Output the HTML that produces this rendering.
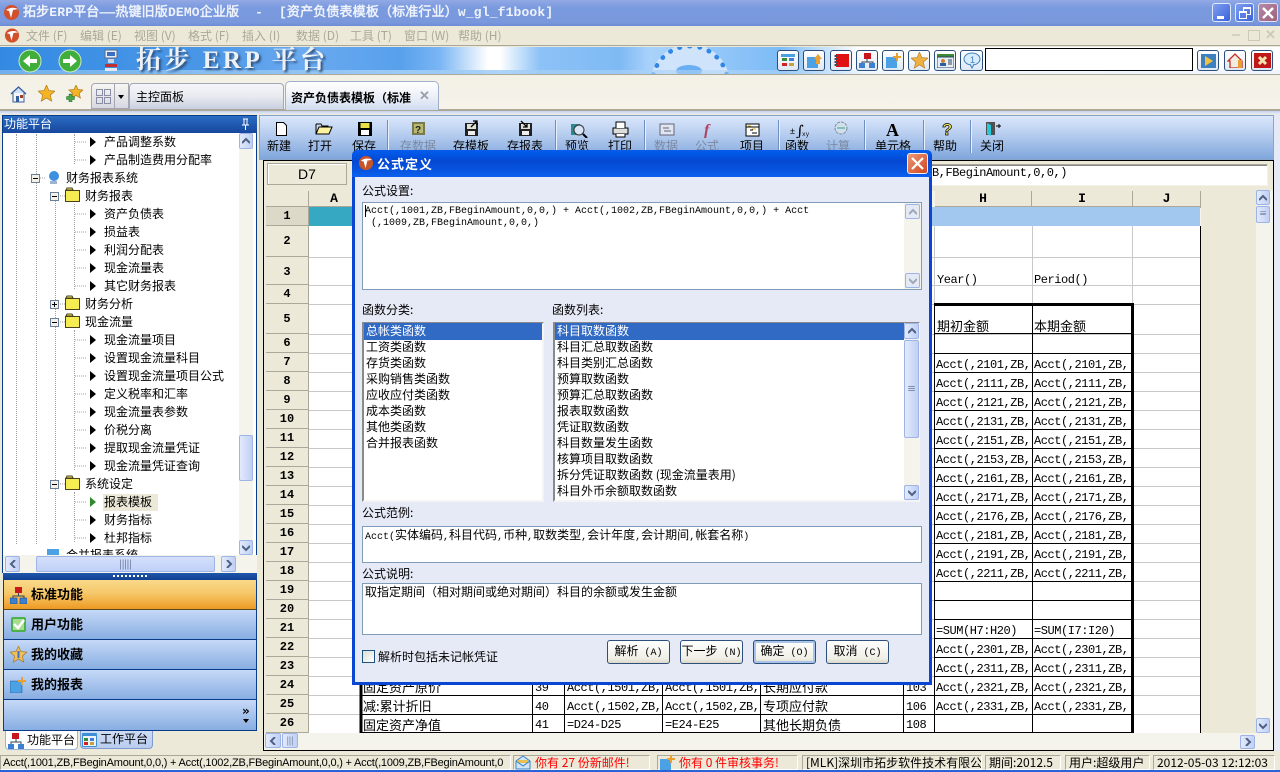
<!DOCTYPE html>
<html><head><meta charset="utf-8"><title>拓步ERP平台</title>
<style>
html,body{margin:0;padding:0}
body{position:relative;width:1280px;height:772px;overflow:hidden;background:#ece9d8;font:12px/14px "WenQuanYi Zen Hei","Noto Sans CJK SC",sans-serif;color:#000}
div,span.a,svg.a{position:absolute;white-space:pre}
.m{font-family:"Liberation Mono","WenQuanYi Zen Hei",monospace}
.k{font-size:12px;font-family:"WenQuanYi Zen Hei","Noto Sans CJK SC",sans-serif}
.c{font:12px/19px "Liberation Mono","WenQuanYi Zen Hei",monospace;letter-spacing:-.45px;overflow:hidden}
.z{font:13px/19px "WenQuanYi Zen Hei","Noto Sans CJK SC",sans-serif}
.t{line-height:14px;height:14px}
.tb{top:139px;width:60px;text-align:center}
.g{color:#7b8aa2}
.sep{top:120px;width:1px;height:33px;background:#6f8fc0;border-right:1px solid #e8f0fc}
.rh{left:266px;width:42px;background:#ece9d8;border-right:1px solid #aca899;border-bottom:1px solid #aca899;text-align:center;font:bold 12px/19px "Liberation Mono",monospace}
.ch{top:191px;height:15px;background:#ece9d8;border-right:1px solid #aca899;border-bottom:2px solid #aca899;text-align:center;font:bold 13px/16px "Liberation Mono",monospace}
.sb{background:linear-gradient(90deg,#e2eafc,#c0d0f4);border:1px solid #9fb4e6;border-radius:2px;box-sizing:border-box;text-align:center;color:#4d6185}
.sb svg{position:absolute;left:50%;top:50%;margin:-4px 0 0 -4px}
.sb path{fill:none;stroke:#4d6185;stroke-width:2}
.box{background:#fff;border:1px solid #7f9db9;box-sizing:border-box}
.btn{top:640px;width:63px;height:24px;box-sizing:border-box;border:1px solid #2d4f7c;border-radius:3px;background:linear-gradient(#fff,#f0efe6 80%,#dcd8c8);text-align:center;font:10px/20px "Liberation Mono","WenQuanYi Zen Hei",monospace}
.nb{left:3px;width:254px;height:30px;box-sizing:border-box;background:linear-gradient(#c6d9f7,#88aee2);border:1px solid #0a3c8c;border-top:0;font:bold 13px/28px "WenQuanYi Zen Hei","Noto Sans CJK SC",sans-serif}
.ib{top:50px;width:22px;height:21px;box-sizing:border-box;border:1px solid #2d4f7c;border-radius:3px;background:linear-gradient(#fff,#dfe8f4)}
.st{top:755px;height:15px;background:#ece9d8;border:1px solid #aca899;box-sizing:border-box;line-height:14px;overflow:hidden;border-right-color:#fff;border-bottom-color:#fff}
</style></head><body>

<!-- title bar -->
<div style="left:0;top:0;width:1280px;height:26px;background:linear-gradient(#92a9e4,#7a9adf 30%,#7a98dc 85%,#6d8cd8)"></div>
<svg class="a" style="left:3px;top:4px" width="17" height="17" viewBox="0 0 17 17"><circle cx="8.5" cy="8.5" r="7.5" fill="#d4502a"/><path d="M3 6Q9 2 15 5L10 6 8 14 6 7z" fill="#fff"/></svg>
<div style="left:23px;top:5px;font:bold 13px/16px 'Liberation Mono','WenQuanYi Zen Hei',monospace;letter-spacing:.15px;color:#eef2fb">拓步ERP平台——热键旧版DEMO企业版  -  [资产负债表模板（标准行业）w_gl_f1book]</div>
<div style="left:1212px;top:3px;width:19px;height:19px;background:linear-gradient(135deg,#7f9ff0,#3a62d8);border:1px solid #dfe8ff;border-radius:3px;box-sizing:border-box"><div style="left:4px;top:12px;width:7px;height:3px;background:#fff"></div></div>
<div style="left:1235px;top:3px;width:19px;height:19px;background:linear-gradient(135deg,#7f9ff0,#3a62d8);border:1px solid #dfe8ff;border-radius:3px;box-sizing:border-box"><div style="left:7px;top:3px;width:6px;height:5px;border:1px solid #fff;border-top-width:2px"></div><div style="left:3px;top:7px;width:6px;height:5px;border:1px solid #fff;border-top-width:2px;background:#5a7ee4"></div></div>
<div style="left:1258px;top:3px;width:20px;height:19px;background:linear-gradient(135deg,#b28aa8,#a0607c);border:1px solid #e4e0ee;border-radius:3px;box-sizing:border-box"><svg class="a" style="left:3px;top:3px" width="12" height="12"><path d="M1 1 11 11M11 1 1 11" stroke="#fff" stroke-width="2.4"/></svg></div>

<!-- menu bar -->
<div style="left:0;top:26px;width:1280px;height:20px;background:#ece9d8;border-bottom:1px solid #aca899;box-sizing:border-box"></div>
<svg class="a" style="left:4px;top:27px" width="16" height="17" viewBox="0 0 17 17"><circle cx="8.5" cy="8.5" r="7.5" fill="#d4502a"/><path d="M3 6Q9 2 15 5L10 6 8 14 6 7z" fill="#fff"/></svg>
<div style="left:26px;top:29px;color:#aca899">文件 (F)</div>
<div style="left:80px;top:29px;color:#aca899">编辑 (E)</div>
<div style="left:134px;top:29px;color:#aca899">视图 (V)</div>
<div style="left:188px;top:29px;color:#aca899">格式 (F)</div>
<div style="left:242px;top:29px;color:#aca899">插入 (I)</div>
<div style="left:296px;top:29px;color:#aca899">数据 (D)</div>
<div style="left:350px;top:29px;color:#aca899">工具 (T)</div>
<div style="left:404px;top:29px;color:#aca899">窗口 (W)</div>
<div style="left:458px;top:29px;color:#aca899">帮助 (H)</div>
<div style="left:1232px;top:33px;width:8px;height:1px;border-bottom:2px solid #d5d2c2"></div>
<div style="left:1248px;top:30px;width:10px;height:9px;border:1px solid #cdc9b8"></div>
<div style="left:1265px;top:28px;color:#cdc9b8;font:bold 13px/14px 'Liberation Sans',sans-serif">✕</div>

<!-- banner -->
<div style="left:0;top:47px;width:1280px;height:27px;overflow:hidden;background:linear-gradient(90deg,#348ae2 0,#4293e6 130px,#4a96e6 200px,#6aaaf0 300px,#58a0ec 400px,#7ab6f4 440px,#fff 488px,#fff 500px,#8cc2f6 540px,#7fbaf4 620px,#a9d2fa 650px,#7dbcf6 780px,#fff 860px,#fff 1280px)">
<div style="left:650px;top:-3px;width:70px;height:70px;border-radius:50%;background:#cfe4fb;border:5px dotted #2f86e4"></div>
<div style="left:676px;top:18px;width:26px;height:12px;border-radius:50%;background:#6aaef4"></div>
<div style="left:0;top:23px;width:100%;height:4px;background:linear-gradient(90deg,#6fb0ee,#9ccaf6 400px,rgba(217,234,252,.3) 900px,#eef5fd)"></div>
</div>
<svg class="a" style="left:18px;top:49px" width="24" height="24" viewBox="0 0 24 24"><circle cx="12" cy="12" r="11" fill="#3fae3a" stroke="#cde8c8"/><path d="M5 12l7-6v4h7v4h-7v4z" fill="#fff"/></svg>
<svg class="a" style="left:58px;top:49px" width="24" height="24" viewBox="0 0 24 24"><circle cx="12" cy="12" r="11" fill="#3fae3a" stroke="#cde8c8"/><path d="M19 12l-7-6v4H5v4h7v4z" fill="#fff"/></svg>
<svg class="a" style="left:103px;top:49px" width="16" height="23" viewBox="0 0 16 23"><rect x="2" y="1" width="12" height="8" fill="#e6eef8" stroke="#5a6a8c"/><rect x="4" y="3" width="8" height="4" fill="#3d6cc0"/><rect x="5" y="10" width="6" height="4" fill="#c9d4e4"/><rect x="2" y="15" width="12" height="3" fill="#c03030"/><rect x="2" y="19" width="12" height="3" fill="#e4e8f0"/></svg>
<div style="left:136px;top:46px;font:bold 25px/29px 'Liberation Serif','Noto Serif CJK SC',serif;color:#eef2f6;text-shadow:2px 2px 2px #33507a;letter-spacing:3.5px">拓步 ERP 平台</div>

<div class="ib" style="left:777px"><svg class="a" style="left:3px;top:3px" width="14" height="13"><rect width="14" height="3" fill="#4ca0e4"/><rect x="1" y="4" width="5" height="3" fill="#3a8a3a"/><rect x="8" y="4" width="5" height="3" fill="#3d80d0"/><rect x="1" y="9" width="5" height="3" fill="#d02020"/><rect x="8" y="9" width="5" height="3" fill="#c8a040"/></svg></div>
<div class="ib" style="left:803px"><svg class="a" style="left:3px;top:2px" width="15" height="15"><rect x="0" y="4" width="11" height="11" fill="#4ca0e4"/><path d="M7 6l4-5 4 5h-2v5H9V6z" fill="#e8a030"/></svg></div>
<div class="ib" style="left:830px"><svg class="a" style="left:2px;top:2px" width="17" height="15"><rect x="3" y="1" width="13" height="13" fill="#e01010"/><path d="M3 2v11" stroke="#404a60" stroke-width="3" stroke-dasharray="2 1"/></svg></div>
<div class="ib" style="left:856px"><svg class="a" style="left:2px;top:2px" width="16" height="15"><rect x="5" y="0" width="7" height="6" fill="#c8161c"/><path d="M8 6v3M3 11V9h11v2" stroke="#345" fill="none"/><rect x="0" y="10" width="6" height="5" fill="#3d80d0"/><rect x="10" y="10" width="6" height="5" fill="#3d80d0"/></svg></div>
<div class="ib" style="left:882px"><svg class="a" style="left:3px;top:2px" width="15" height="15"><rect x="0" y="4" width="11" height="11" fill="#4ca0e4"/><path d="M7 3h3V0h2v3h3v2h-3v3h-2V5H7z" fill="#e8a030"/></svg></div>
<div class="ib" style="left:908px"><svg class="a" style="left:2px;top:1px" width="17" height="17" viewBox="0 0 17 17"><path d="M8.5 0l2.4 5.6 6 .5-4.6 4 1.400 6-5.200-3.200-5.200 3.200 1.400-6L0 6.100l6-.5z" fill="#eeb040" stroke="#b07820" stroke-width=".6"/></svg></div>
<div class="ib" style="left:934px"><svg class="a" style="left:2px;top:3px" width="17" height="14"><rect width="17" height="3" fill="#3a8a3a"/><rect y="3" width="17" height="11" fill="#e6eef8" stroke="#345"/><circle cx="6" cy="7" r="2" fill="#d08030"/><rect x="3" y="9" width="6" height="3" fill="#2a60a0"/><path d="M11 6h4M11 8h4M11 10h4" stroke="#345"/></svg></div>
<div class="ib" style="left:960px;width:23px"><svg class="a" style="left:2px;top:1px" width="18" height="17"><ellipse cx="9" cy="7" rx="8" ry="6" fill="#d8ecfb" stroke="#3d80c0"/><path d="M7 12l2 4 2-4" fill="#d8ecfb" stroke="#3d80c0"/><text x="7" y="11" font-size="9" fill="#3d80c0" font-family="Liberation Sans">1</text></svg></div>
<div style="left:985px;top:48px;width:208px;height:23px;background:#fff;border:1px solid #000;box-sizing:border-box"></div>
<div class="ib" style="left:1197px"><svg class="a" style="left:3px;top:3px" width="15" height="14"><rect width="15" height="14" fill="#3d80c0"/><path d="M4 2l8 5-8 5z" fill="#f0c040"/></svg></div>
<div class="ib" style="left:1224px"><svg class="a" style="left:2px;top:2px" width="17" height="15"><path d="M1 8l7-7 7 7v7H3V8z" fill="#f0ece0" stroke="#c03020" stroke-width="1.300"/><rect x="11" y="7" width="4" height="8" fill="#e8a030"/></svg></div>
<div class="ib" style="left:1251px"><svg class="a" style="left:2px;top:2px" width="17" height="15"><rect width="17" height="15" fill="#c01818"/><path d="M5 4l7 7M12 4l-7 7" stroke="#f4e4b0" stroke-width="3"/></svg></div>

<!-- tab strip -->
<div style="left:0;top:74px;width:1280px;height:36px;background:linear-gradient(#f3f1e6,#f5f3ea);border-top:1px solid #aca899;box-sizing:border-box"></div>
<div style="left:0;top:109px;width:1280px;height:2px;background:#aca899"></div>
<div style="left:0;top:111px;width:1280px;height:3px;background:linear-gradient(#c4cfea,#e6eaf6)"></div>
<svg class="a" style="left:10px;top:85px" width="17" height="18" viewBox="0 0 17 18"><path d="M1 9l7.500-7 7.500 7" fill="#cfe0f4" stroke="#355f9c" stroke-width="1.300"/><path d="M3 8v9h11V8" fill="#f4f6fb" stroke="#355f9c"/><rect x="6" y="11" width="3" height="6" fill="#355f9c"/><rect x="10" y="10" width="3" height="3" fill="#a04020"/></svg>
<svg class="a" style="left:38px;top:85px" width="17" height="17" viewBox="0 0 17 17"><path d="M8.500 0l2.400 5.600 6 .5-4.600 4 1.400 6-5.200-3.200-5.200 3.200 1.400-6L0 6.100l6-.5z" fill="#f4b424" stroke="#b07820" stroke-width=".7"/></svg>
<svg class="a" style="left:66px;top:85px" width="17" height="17" viewBox="0 0 17 17"><path d="M10 0l2 4.500 5 .5-3.800 3.300 1.200 4.700-4.400-2.600-4.400 2.600 1.200-4.700L2.900 5l5-.5z" fill="#f4b424" stroke="#b07820" stroke-width=".7"/><path d="M3 9v2.500H.5v3H3V17h3v-2.500h2.500v-3H6V9z" fill="#46a846" stroke="#2a6a2a" stroke-width=".5"/></svg>
<div style="left:91px;top:83px;width:24px;height:26px;background:linear-gradient(#f6f6f2,#d8d8e2);border:1px solid #a5a6b4;border-radius:4px 0 0 0;box-sizing:border-box"><div style="left:4px;top:5px;width:5px;height:5px;border:1px solid #8a8ea4"></div><div style="left:12px;top:5px;width:5px;height:5px;border:1px solid #8a8ea4"></div><div style="left:4px;top:13px;width:5px;height:5px;border:1px solid #8a8ea4"></div><div style="left:12px;top:13px;width:5px;height:5px;border:1px solid #8a8ea4"></div></div>
<div style="left:115px;top:83px;width:14px;height:26px;background:linear-gradient(#f6f6f2,#d8d8e2);border:1px solid #a5a6b4;border-left:0;box-sizing:border-box"><div style="left:3px;top:11px;width:0;height:0;border:3px solid transparent;border-top:4px solid #000"></div></div>
<div style="left:129px;top:83px;width:155px;height:26px;background:linear-gradient(#f5f6fa,#e8eaf0 50%,#c8cfe0);border:1px solid #a5a6b4;border-bottom:0;border-radius:4px 4px 0 0;box-sizing:border-box;line-height:26px;padding-left:6px">主控面板</div>
<div style="left:285px;top:81px;width:154px;height:29px;background:linear-gradient(#fff,#e8edf6 60%,#cfdcf0);border:1px solid #9fb0c8;border-bottom:0;border-radius:5px 5px 0 0;box-sizing:border-box;font-weight:bold;line-height:32px;padding-left:5px;overflow:hidden"><span style="display:inline-block;width:120px;overflow:hidden;vertical-align:top;font-size:12px">资产负债表模板（标准行业</span></div>
<div style="left:419px;top:89px;color:#9aa0aa;font:bold 13px/14px 'Liberation Sans',sans-serif">✕</div>

<!-- side strips -->
<div style="left:1274px;top:114px;width:6px;height:638px;background:#e6eaf6"></div>

<!-- left panel -->
<div style="left:2px;top:115px;width:255px;height:458px;background:#fff;border:1px solid #0a3c8c;box-sizing:border-box"></div>
<div style="left:3px;top:116px;width:254px;height:17px;background:linear-gradient(#2b6cc4,#16479c);color:#fff;line-height:16px;padding-left:1px;font-size:12px;box-sizing:border-box">功能平台</div>
<svg class="a" style="left:240px;top:118px" width="12" height="13"><path d="M3 1h5M4 1v6h3V1M2 7h7M5.500 7v5" stroke="#fff" fill="none"/></svg>
<!-- dotted tree lines -->
<div style="left:16px;top:134px;height:420px;border-left:1px dotted #a0a0a0"></div>
<div style="left:36px;top:134px;height:420px;border-left:1px dotted #a0a0a0"></div>
<div style="left:55px;top:195px;height:345px;border-left:1px dotted #a0a0a0"></div>
<div style="left:74px;top:134px;height:30px;border-left:1px dotted #a0a0a0"></div>
<div style="left:74px;top:204px;height:85px;border-left:1px dotted #a0a0a0"></div>
<div style="left:74px;top:330px;height:140px;border-left:1px dotted #a0a0a0"></div>
<div style="left:74px;top:492px;height:50px;border-left:1px dotted #a0a0a0"></div>

<div class="t" style="left:104px;top:135px">产品调整系数</div><div class="t" style="left:104px;top:153px">产品制造费用分配率</div>
<div class="t" style="left:66px;top:171px">财务报表系统</div><div class="t" style="left:85px;top:189px">财务报表</div>
<div class="t" style="left:104px;top:207px">资产负债表</div><div class="t" style="left:104px;top:225px">损益表</div><div class="t" style="left:104px;top:243px">利润分配表</div><div class="t" style="left:104px;top:261px">现金流量表</div><div class="t" style="left:104px;top:279px">其它财务报表</div>
<div class="t" style="left:85px;top:297px">财务分析</div><div class="t" style="left:85px;top:315px">现金流量</div>
<div class="t" style="left:104px;top:333px">现金流量项目</div><div class="t" style="left:104px;top:351px">设置现金流量科目</div><div class="t" style="left:104px;top:369px">设置现金流量项目公式</div><div class="t" style="left:104px;top:387px">定义税率和汇率</div><div class="t" style="left:104px;top:405px">现金流量表参数</div><div class="t" style="left:104px;top:423px">价税分离</div><div class="t" style="left:104px;top:441px">提取现金流量凭证</div><div class="t" style="left:104px;top:459px">现金流量凭证查询</div>
<div class="t" style="left:85px;top:477px">系统设定</div>
<div style="left:103px;top:494px;width:55px;height:17px;background:#ece9d8"></div><div class="t" style="left:104px;top:495px">报表模板</div>
<div class="t" style="left:104px;top:513px">财务指标</div><div class="t" style="left:104px;top:531px">杜邦指标</div>

<svg class="a" style="left:3px;top:134px" width="236" height="421" viewBox="3 134 236 421">
<g stroke="#a0a0a0" stroke-dasharray="1 1">
<path d="M75 142h11M75 160h11M75 214h11M75 232h11M75 250h11M75 268h11M75 286h11M75 340h11M75 358h11M75 376h11M75 394h11M75 412h11M75 430h11M75 448h11M75 466h11M75 502h11M75 520h11M75 538h11M40 178h6M60 196h5M60 304h5M60 322h5M60 484h5"/></g>
<g fill="#000"><path d="M90 137l6 5-6 5zM90 155l6 5-6 5zM90 209l6 5-6 5zM90 227l6 5-6 5zM90 245l6 5-6 5zM90 263l6 5-6 5zM90 281l6 5-6 5zM90 335l6 5-6 5zM90 353l6 5-6 5zM90 371l6 5-6 5zM90 389l6 5-6 5zM90 407l6 5-6 5zM90 425l6 5-6 5zM90 443l6 5-6 5zM90 461l6 5-6 5zM90 515l6 5-6 5zM90 533l6 5-6 5z"/><path d="M90 497l6 5-6 5z" fill="#2f8a2f"/></g>
<g fill="#f4f2e8" stroke="#6a7f9c"><rect x="31.500" y="174.500" width="8" height="8"/><rect x="50.500" y="192.500" width="8" height="8"/><rect x="50.500" y="300.500" width="8" height="8"/><rect x="50.500" y="318.500" width="8" height="8"/><rect x="50.500" y="480.500" width="8" height="8"/></g>
<path d="M33 178.500h5M52 196.500h5M52 304.500h5M54.500 302v5M52 322.500h5M52 484.500h5" stroke="#000"/>
<g fill="#f4ec50" stroke="#4a4020"><path d="M65.500 190.500h14v11h-14zM66 190l1-2h5l1 2zM65.500 298.500h14v11h-14zM66 298l1-2h5l1 2zM65.500 316.500h14v11h-14zM66 316l1-2h5l1 2zM65.500 478.500h14v11h-14zM66 478l1-2h5l1 2z"/></g>
<g><circle cx="54" cy="176" r="5" fill="#3d90e0"/><rect x="50" y="181" width="7" height="3" fill="#a0b4d0"/></g>
</svg>
<div style="left:3px;top:545px;width:236px;height:10px;background:#fff"></div>
<div style="left:47px;top:549px;width:12px;height:6px;background:#4ca0e4"></div>
<div class="t" style="left:66px;top:549px;height:6px;overflow:hidden;line-height:12px">合并报表系统</div>

<!-- left vscroll -->
<div style="left:239px;top:134px;width:14px;height:421px;background:#f5f4ec"></div>
<div class="sb" style="left:239px;top:133px;width:14px;height:16px"><svg width="8" height="8"><path d="M0 6l4-4 4 4"/></svg></div>
<div class="sb" style="left:239px;top:435px;width:14px;height:46px"></div>
<div class="sb" style="left:239px;top:540px;width:14px;height:15px"><svg width="8" height="8"><path d="M0 2l4 4 4-4"/></svg></div>
<!-- left hscroll -->
<div style="left:3px;top:555px;width:254px;height:18px;background:#f5f4ec"></div>
<div class="sb" style="left:5px;top:556px;width:15px;height:16px"><svg width="8" height="8"><path d="M6 0L2 4l4 4"/></svg></div>
<div class="sb" style="left:36px;top:556px;width:179px;height:16px;background:linear-gradient(#d4dffa,#c0d0f8);line-height:14px;font-size:9px">|||||</div>
<div class="sb" style="left:221px;top:556px;width:15px;height:16px"><svg width="8" height="8"><path d="M2 0l4 4-4 4"/></svg></div>
<!-- splitter -->
<div style="left:3px;top:573px;width:254px;height:7px;background:linear-gradient(#1e57ad,#123f90)"></div>
<div style="left:113px;top:575px;width:34px;height:2px;background:repeating-linear-gradient(90deg,#fff 0 2px,transparent 2px 4px)"></div>
<!-- nav bars -->
<div class="nb" style="top:580px;background:linear-gradient(#f9d98a,#f6c86a 45%,#ee9a24);border-bottom-color:#5a4a20;padding-left:27px">标准功能</div>
<div class="nb" style="top:610px;padding-left:27px">用户功能</div>
<div class="nb" style="top:640px;padding-left:27px">我的收藏</div>
<div class="nb" style="top:670px;padding-left:27px">我的报表</div>
<div class="nb" style="top:700px;height:31px"></div>
<div style="left:242px;top:705px;font:bold 12px/12px 'DejaVu Sans',sans-serif">»</div>
<div style="left:243px;top:719px;width:0;height:0;border:3px solid transparent;border-top:4px solid #000"></div>
<svg class="a" style="left:10px;top:587px" width="17" height="17"><rect x="5" y="0" width="7" height="6" fill="#c8161c"/><path d="M8.500 6v3M3 11V9h11v2" stroke="#345" fill="none"/><rect x="0" y="11" width="7" height="6" fill="#3d80d0" stroke="#1a4a90" stroke-width=".6"/><rect x="10" y="11" width="7" height="6" fill="#3d80d0" stroke="#1a4a90" stroke-width=".6"/></svg>
<svg class="a" style="left:11px;top:617px" width="15" height="15"><rect width="15" height="15" rx="2" fill="#4cb04c"/><rect x="2" y="2" width="11" height="11" fill="#a8dc90"/><path d="M3 7l4 4 6-8" stroke="#fff" stroke-width="2.500" fill="none"/></svg>
<svg class="a" style="left:10px;top:646px" width="17" height="17" viewBox="0 0 17 17"><path d="M8.500 0l2.400 5.600 6 .5-4.600 4 1.400 6-5.200-3.200-5.200 3.200 1.400-6L0 6.100l6-.5z" fill="#f0c060" stroke="#a87820" stroke-width=".7"/><path d="M8.500 5v7" stroke="#3d70c0" stroke-width="2"/></svg>
<svg class="a" style="left:10px;top:677px" width="16" height="16"><rect x="0" y="4" width="12" height="12" rx="1" fill="#4ca0e4" stroke="#1a5a9c" stroke-width=".6"/><path d="M8 3h3V0h2v3h3v2h-3v3h-2V5H8z" fill="#e8a030"/></svg>
<!-- bottom tabs -->
<div style="left:5px;top:731px;width:73px;height:19px;background:#fff;border:1px solid #9fb4d4;border-top:0;border-radius:0 0 4px 4px;box-sizing:border-box;line-height:17px;padding-left:21px">功能平台</div>
<div style="left:80px;top:731px;width:73px;height:18px;background:linear-gradient(#cfdcf4,#b9cdf0);border:1px solid #7f9ccc;border-top:0;border-radius:0 0 4px 4px;box-sizing:border-box;line-height:16px;padding-left:19px">工作平台</div>
<svg class="a" style="left:8px;top:733px" width="16" height="16"><rect x="4" y="0" width="7" height="6" fill="#c8161c"/><path d="M8 6v3M3 11V9h10v2" stroke="#345" fill="none"/><rect x="0" y="11" width="6" height="5" fill="#3d80d0"/><rect x="10" y="11" width="6" height="5" fill="#3d80d0"/></svg>
<svg class="a" style="left:82px;top:733px" width="15" height="14"><rect width="15" height="14" rx="1" fill="#3d90d8"/><rect x="1" y="3" width="13" height="10" fill="#eef3fb"/><rect x="2" y="5" width="4" height="3" fill="#3a8a3a"/><rect x="8" y="5" width="4" height="3" fill="#3d80d0"/><rect x="2" y="9" width="4" height="3" fill="#d02020"/><rect x="8" y="9" width="4" height="3" fill="#c8a040"/></svg>

<!-- right frame -->
<div style="left:263px;top:160px;width:1011px;height:591px;border:1px solid #000;box-sizing:border-box;background:#f5f4ec"></div>
<div style="left:259px;top:115px;width:1015px;height:45px;background:linear-gradient(#dbe7fb,#b9cff0 40%,#7fa6dc);border:1px solid #8aa4cc;box-sizing:border-box"></div>
<div class="sep" style="left:387px"></div><div class="sep" style="left:555px"></div><div class="sep" style="left:644px"></div><div class="sep" style="left:778px"></div><div class="sep" style="left:864px"></div><div class="sep" style="left:923px"></div><div class="sep" style="left:970px"></div>

<div class="tb" style="left:249px">新建</div><div class="tb" style="left:290px">打开</div><div class="tb" style="left:334px">保存</div><div class="tb g" style="left:388px">存数据</div><div class="tb" style="left:441px">存模板</div><div class="tb" style="left:495px">存报表</div><div class="tb" style="left:547px">预览</div><div class="tb" style="left:590px">打印</div><div class="tb g" style="left:636px">数据</div><div class="tb g" style="left:677px">公式</div><div class="tb" style="left:722px">项目</div><div class="tb" style="left:767px">函数</div><div class="tb g" style="left:808px">计算</div><div class="tb" style="left:863px">单元格</div><div class="tb" style="left:915px">帮助</div><div class="tb" style="left:962px">关闭</div>

<svg class="a" style="left:261px;top:118px" width="750" height="20" viewBox="261 118 750 20">
<path d="M276.500 122.500h7l3 3v10h-10z" fill="#fff" stroke="#000"/>
<path d="M316 124v10h13l3-7h-13l-3 7M316 124h5l1 2h6v1" fill="#fbf3a0" stroke="#000"/>
<rect x="358" y="122" width="14" height="14" fill="#000"/><rect x="360.500" y="123" width="9" height="5" fill="#ece048"/><rect x="361" y="130" width="8" height="5" fill="#fff"/>
<rect x="412" y="122" width="13" height="13" fill="#7a7a50"/><rect x="414" y="124" width="9" height="9" fill="#b8b870"/><text x="415" y="133" font-size="10" font-weight="bold" fill="#222" font-family="Liberation Sans">?</text>
<rect x="465" y="123" width="13" height="13" fill="#222"/><rect x="467" y="124" width="9" height="5" fill="#e0e0d8"/><rect x="468" y="131" width="7" height="4" fill="#eee"/><path d="M471 127l6-6M473 121h4v4" stroke="#000" fill="none" stroke-width="1.300"/>
<rect x="519" y="123" width="13" height="13" fill="#222"/><rect x="521" y="124" width="9" height="5" fill="#e0e0d8"/><rect x="522" y="131" width="7" height="4" fill="#eee"/><path d="M521 121l6 6M527 123v4h-4" stroke="#000" fill="none" stroke-width="1.300"/>
<rect x="571" y="124" width="9" height="11" fill="#2a8a90"/><circle cx="579" cy="130" r="5" fill="#dbe4f6" stroke="#333"/><path d="M583 134l4 4" stroke="#000" stroke-width="2"/>
<path d="M613 128h15v6h-15z" fill="#ddd" stroke="#000"/><path d="M616 128v-6h9v6M616 134v3h9v-3" fill="#fff" stroke="#000"/>
<rect x="660" y="124" width="14" height="11" fill="#dfe6f0" stroke="#667"/><path d="M663 128h6M664 131h7" stroke="#667"/>
<text x="704" y="135" font-size="16" font-style="italic" font-weight="bold" fill="#b04060" font-family="Liberation Serif">f</text>
<rect x="746" y="124" width="13" height="12" fill="#fff" stroke="#000"/><path d="M746 127h13M750 130h3M752 133h5" stroke="#000" fill="none"/><path d="M748 126h3M752 129h4" stroke="#c8b020"/>
<text x="790" y="134" font-size="9" font-family="Liberation Sans">±</text><text x="796" y="136" font-size="15" font-family="DejaVu Serif">∫</text><text x="802" y="136" font-size="6" font-family="Liberation Mono">xy</text>
<circle cx="841" cy="128" r="6" fill="#cfe0ea" stroke="#7a8a9c" stroke-dasharray="3 1"/><path d="M837 128h8" stroke="#3aa090"/>
<text x="886" y="136" font-size="18" font-weight="bold" font-family="Liberation Serif">A</text>
<text x="942" y="135" font-size="17" font-weight="bold" fill="#f4e860" stroke="#000" stroke-width=".7" font-family="Liberation Sans">?</text>
<rect x="986" y="122" width="9" height="13" fill="#505050"/><path d="M987 123l4 2v11l-4-2z" fill="#28c8d8"/><path d="M996 126h5M999 124v4" stroke="#000"/>
</svg>

<!-- formula bar -->
<div style="left:264px;top:161px;width:1009px;height:30px;background:#ece9d8"></div>
<div style="left:267px;top:163px;width:80px;height:22px;background:#ece9d8;border:1px solid #aca899;box-shadow:inset 1px 1px #fff;box-sizing:border-box;text-align:center;font:14px/20px 'Liberation Sans',sans-serif">D7</div>
<div style="left:353px;top:164px;width:915px;height:22px;background:#fff;border:1px solid #aca899;border-bottom-color:#f4f2e8;border-right-color:#f4f2e8;box-shadow:inset 0 1px #888;box-sizing:border-box"></div>
<div class="c" style="left:932px;top:164px;height:19px;line-height:19px;width:200px">B,FBeginAmount,0,0,)</div>

<!-- grid -->
<div style="left:309px;top:207px;width:891px;height:526px;background:#fff"></div>
<div style="left:264px;top:191px;width:2px;height:542px;background:#ece9d8"></div>
<div class="ch" style="left:266px;width:42px"></div>
<div class="ch" style="left:309px;width:50px">A</div>
<div class="ch" style="left:935px;width:96px">H</div><div class="ch" style="left:1032px;width:100px">I</div><div class="ch" style="left:1133px;width:67px">J</div>
<div style="left:309px;top:207px;width:891px;height:19px;background:#a3c8ef"></div>
<div style="left:309px;top:207px;width:50px;height:19px;background:#37a8c2"></div>
<div class="rh" style="top:207px;height:18px;background:#dcd9c8">1</div>
<div class="rh" style="top:226px;height:30px;line-height:30px">2</div>
<div class="rh" style="top:257px;height:27px;line-height:30px">3</div>
<div class="rh" style="top:285px;height:18px">4</div>
<div class="rh" style="top:304px;height:29px;line-height:30px">5</div>
<div class="rh" style="top:334px;height:18px">6</div>
<div class="rh" style="top:353px;height:18px">7</div><div class="rh" style="top:372px;height:18px">8</div><div class="rh" style="top:391px;height:18px">9</div><div class="rh" style="top:410px;height:18px">10</div><div class="rh" style="top:429px;height:18px">11</div><div class="rh" style="top:448px;height:18px">12</div><div class="rh" style="top:467px;height:18px">13</div><div class="rh" style="top:486px;height:18px">14</div><div class="rh" style="top:505px;height:18px">15</div><div class="rh" style="top:524px;height:18px">16</div><div class="rh" style="top:543px;height:18px">17</div><div class="rh" style="top:562px;height:18px">18</div><div class="rh" style="top:581px;height:18px">19</div><div class="rh" style="top:600px;height:18px">20</div><div class="rh" style="top:619px;height:18px">21</div><div class="rh" style="top:638px;height:18px">22</div><div class="rh" style="top:657px;height:18px">23</div><div class="rh" style="top:676px;height:18px">24</div><div class="rh" style="top:695px;height:18px">25</div><div class="rh" style="top:714px;height:18px">26</div>

<svg class="a" style="left:0;top:0" width="1280" height="772" shape-rendering="crispEdges">
<path stroke="#c8c8c8" d="M309 257.500H1200M309 285.500H1200M309 304.500H1200M309 334.500H1200M309 353.500H1200M309 372.500H1200M309 391.500H1200M309 410.500H1200M309 429.500H1200M309 448.500H1200M309 467.500H1200M309 486.500H1200M309 505.500H1200M309 524.500H1200M309 543.500H1200M309 562.500H1200M309 581.500H1200M309 600.500H1200M309 619.500H1200M309 638.500H1200M309 657.500H1200M309 676.500H1200M309 695.500H1200M309 714.500H1200"/>
<path stroke="#c8c8c8" d="M1032.500 226V304M934.500 226V304M1132.500 226V304"/>
<path stroke="#000" d="M1200.500 226V733M934 333.500H1133M934 353.500H1133M934 372.500H1133M934 391.500H1133M934 410.500H1133M934 429.500H1133M934 448.500H1133M934 467.500H1133M934 486.500H1133M934 505.500H1133M934 524.500H1133M934 543.500H1133M934 562.500H1133M934 581.500H1133M934 600.500H1133M934 619.500H1133M934 638.500H1133M934 657.500H1133M934 676.500H1133M360 695.500H1133M360 714.500H1133M360 732.500H1133M934.500 304V733M1032.500 304V733M532.500 676V733M564.500 676V733M662.500 676V733M760.500 676V733M903.500 676V733"/>
<path stroke="#000" stroke-width="3" d="M934 304.500H1134M1132.500 304V733M361 676V733"/>
</svg>

<div class="c" style="left:937px;top:271px">Year()</div><div class="c" style="left:1034px;top:271px">Period()</div>
<div class="z" style="left:937px;top:316px">期初金额</div><div class="z" style="left:1034px;top:316px">本期金额</div>

<div class="c" style="left:936px;top:356px;width:96px;height:228px">Acct(,2101,ZB,
Acct(,2111,ZB,
Acct(,2121,ZB,
Acct(,2131,ZB,
Acct(,2151,ZB,
Acct(,2153,ZB,
Acct(,2161,ZB,
Acct(,2171,ZB,
Acct(,2176,ZB,
Acct(,2181,ZB,
Acct(,2191,ZB,
Acct(,2211,ZB,</div>
<div class="c" style="left:1034px;top:356px;width:97px;height:228px">Acct(,2101,ZB,
Acct(,2111,ZB,
Acct(,2121,ZB,
Acct(,2131,ZB,
Acct(,2151,ZB,
Acct(,2153,ZB,
Acct(,2161,ZB,
Acct(,2171,ZB,
Acct(,2176,ZB,
Acct(,2181,ZB,
Acct(,2191,ZB,
Acct(,2211,ZB,</div>
<div class="c" style="left:936px;top:622px;width:96px">=SUM(H7:H20)</div><div class="c" style="left:1034px;top:622px;width:97px">=SUM(I7:I20)</div>
<div class="c" style="left:936px;top:641px;width:96px;height:76px">Acct(,2301,ZB,
Acct(,2311,ZB,
Acct(,2321,ZB,
Acct(,2331,ZB,</div>
<div class="c" style="left:1034px;top:641px;width:97px;height:76px">Acct(,2301,ZB,
Acct(,2311,ZB,
Acct(,2321,ZB,
Acct(,2331,ZB,</div>
<div class="z" style="left:363px;top:677px">固定资产原价</div><div class="c" style="left:535px;top:679px">39</div><div class="c" style="left:567px;top:679px;width:95px">Acct(,1501,ZB,</div><div class="c" style="left:665px;top:679px;width:95px">Acct(,1501,ZB,</div><div class="z" style="left:763px;top:677px">长期应付款</div><div class="c" style="left:906px;top:679px">103</div>
<div class="z" style="left:363px;top:696px">减:累计折旧</div><div class="c" style="left:535px;top:698px">40</div><div class="c" style="left:567px;top:698px;width:95px">Acct(,1502,ZB,</div><div class="c" style="left:665px;top:698px;width:95px">Acct(,1502,ZB,</div><div class="z" style="left:763px;top:696px">专项应付款</div><div class="c" style="left:906px;top:698px">106</div>
<div class="z" style="left:363px;top:715px">固定资产净值</div><div class="c" style="left:535px;top:716px">41</div><div class="c" style="left:567px;top:716px">=D24-D25</div><div class="c" style="left:665px;top:716px">=E24-E25</div><div class="z" style="left:763px;top:715px">其他长期负债</div><div class="c" style="left:906px;top:716px">108</div>

<!-- sheet scrollbars -->
<div style="left:1201px;top:191px;width:55px;height:542px;background:#ece9d8"></div>
<div style="left:1256px;top:191px;width:14px;height:542px;background:#f5f4ec"></div>
<div class="sb" style="left:1256px;top:190px;width:14px;height:15px"><svg width="8" height="8"><path d="M0 6l4-4 4 4"/></svg></div>
<div class="sb" style="left:1256px;top:206px;width:14px;height:17px;font-size:8px;line-height:14px">≡</div>
<div class="sb" style="left:1256px;top:718px;width:14px;height:15px"><svg width="8" height="8"><path d="M0 2l4 4 4-4"/></svg></div>
<div style="left:265px;top:733px;width:1007px;height:16px;background:#f5f4ec"></div>
<div class="sb" style="left:265px;top:733px;width:16px;height:15px"><svg width="8" height="8"><path d="M6 0L2 4l4 4"/></svg></div>
<div class="sb" style="left:282px;top:733px;width:16px;height:15px;font-size:8px;line-height:13px">|||</div>
<div class="sb" style="left:1240px;top:735px;width:15px;height:14px"><svg width="8" height="8"><path d="M2 0l4 4-4 4"/></svg></div>

<!-- dialog -->
<div style="left:352px;top:150px;width:580px;height:535px;background:#e6eaf6;border:3px solid #0a46d2;border-top:0;border-radius:5px 5px 0 0;box-sizing:border-box"></div>
<div style="left:352px;top:150px;width:580px;height:27px;background:linear-gradient(#0a5cec,#0058e8 12%,#0548d2 40%,#0656e2 80%,#0a60f0);border-radius:6px 6px 0 0"></div>
<svg class="a" style="left:358px;top:155px" width="16" height="16" viewBox="0 0 17 17"><circle cx="8.500" cy="8.500" r="7.500" fill="#c8552a"/><path d="M3 6Q9 2 15 5L10 6 8 14 6 7z" fill="#fff"/></svg>
<div style="left:377px;top:155px;color:#fff;font:bold 13px/17px 'WenQuanYi Zen Hei','Noto Sans CJK SC',sans-serif;letter-spacing:1px">公式定义</div>
<div style="left:907px;top:153px;width:21px;height:21px;box-sizing:border-box;border:1px solid #f0f0f0;border-radius:3px;background:linear-gradient(135deg,#ec9a78,#d0451e)"><svg class="a" style="left:3px;top:3px" width="13" height="13"><path d="M1 1 12 12M12 1 1 12" stroke="#fff" stroke-width="2.200"/></svg></div>

<div style="left:362px;top:184px">公式设置:</div>
<div class="box" style="left:362px;top:202px;width:560px;height:88px"></div>
<div style="left:365px;top:205px;width:1px;height:12px;background:#000"></div>
<div class="m" style="left:365px;top:206px;font-size:10px;line-height:12px">Acct(,1001,ZB,FBeginAmount,0,0,) + Acct(,1002,ZB,FBeginAmount,0,0,) + Acct
 (,1009,ZB,FBeginAmount,0,0,)</div>
<div style="left:904px;top:203px;width:17px;height:86px;background:#f5f4ec"></div>
<div class="sb" style="left:905px;top:204px;width:15px;height:15px;background:#e4e9f6"><svg width="8" height="8"><path d="M0 6l4-4 4 4" style="stroke:#a0a6b4"/></svg></div>
<div class="sb" style="left:905px;top:273px;width:15px;height:15px;background:#e4e9f6"><svg width="8" height="8"><path d="M0 2l4 4 4-4" style="stroke:#a0a6b4"/></svg></div>

<div style="left:362px;top:303px">函数分类:</div>
<div style="left:552px;top:303px">函数列表:</div>
<div style="left:362px;top:322px;width:182px;height:180px;background:#fff;border:2px solid #8a8a8a;border-right-color:#f4f4f4;border-bottom-color:#f4f4f4;box-sizing:border-box"></div>
<div style="left:553px;top:322px;width:367px;height:180px;background:#fff;border:2px solid #8a8a8a;border-right-color:#f4f4f4;border-bottom-color:#f4f4f4;box-sizing:border-box"></div>
<div style="left:364px;top:323px;width:178px;height:17px;background:#316ac5"></div>
<div style="left:555px;top:323px;width:349px;height:17px;background:#316ac5"></div>
<div style="left:366px;top:323px;line-height:16px;color:#fff">总帐类函数</div>
<div style="left:366px;top:339px;line-height:16px">工资类函数
存货类函数
采购销售类函数
应收应付类函数
成本类函数
其他类函数
合并报表函数</div>
<div style="left:557px;top:323px;line-height:16px;color:#fff">科目取数函数</div>
<div style="left:557px;top:339px;line-height:16px">科目汇总取数函数
科目类别汇总函数
预算取数函数
预算汇总取数函数
报表取数函数
凭证取数函数
科目数量发生函数
核算项目取数函数
拆分凭证取数函数 (现金流量表用)
科目外币余额取数函数</div>
<div style="left:904px;top:323px;width:15px;height:177px;background:#f5f4ec"></div>
<div class="sb" style="left:904px;top:323px;width:15px;height:16px"><svg width="8" height="8"><path d="M0 6l4-4 4 4"/></svg></div>
<div class="sb" style="left:904px;top:340px;width:15px;height:98px;line-height:96px;font-size:9px">≡</div>
<div class="sb" style="left:904px;top:485px;width:15px;height:15px"><svg width="8" height="8"><path d="M0 2l4 4 4-4"/></svg></div>

<div style="left:362px;top:506px">公式范例:</div>
<div class="box" style="left:362px;top:526px;width:560px;height:37px"></div>
<div class="m" style="left:365px;top:528px;font-size:10px;line-height:13px">Acct(<span class="k">实体编码</span>,<span class="k">科目代码</span>,<span class="k">币种</span>,<span class="k">取数类型</span>,<span class="k">会计年度</span>,<span class="k">会计期间</span>,<span class="k">帐套名称</span>)</div>
<div style="left:362px;top:567px">公式说明:</div>
<div class="box" style="left:362px;top:583px;width:560px;height:52px"></div>
<div style="left:365px;top:585px">取指定期间（相对期间或绝对期间）科目的余额或发生金额</div>

<div style="left:362px;top:650px;width:13px;height:13px;box-sizing:border-box;border:1px solid #1c5180;background:linear-gradient(135deg,#dcdcd7,#fff)"></div>
<div style="left:378px;top:650px">解析时包括未记帐凭证</div>
<div class="btn" style="left:607px"><span class="k">解析</span> (A)</div>
<div class="btn" style="left:680px"><span class="k">下一步</span> (N)</div>
<div class="btn" style="left:753px;box-shadow:inset 0 0 0 2px #a9c4ea"><span class="k">确定</span> (O)</div>
<div class="btn" style="left:826px"><span class="k">取消</span> (C)</div>

<!-- status bar -->
<div style="left:0;top:751px;width:1280px;height:19px;background:#ece9d8"></div>
<div style="left:0;top:770px;width:1280px;height:2px;background:#2a62d8"></div>
<div class="st" style="left:0;width:511px;font-family:'Liberation Sans',sans-serif;font-size:11px;letter-spacing:-.2px;padding-left:2px">Acct(,1001,ZB,FBeginAmount,0,0,) + Acct(,1002,ZB,FBeginAmount,0,0,) + Acct(,1009,ZB,FBeginAmount,0</div>
<div class="st" style="left:513px;width:137px;color:#f00;padding-left:21px">你有 27 份新邮件!</div>
<div class="st" style="left:657px;width:141px;color:#f00;padding-left:21px">你有 0 件审核事务!</div>
<div class="st" style="left:802px;width:180px;padding-left:3px">[MLK]深圳市拓步软件技术有限公</div>
<div class="st" style="left:985px;width:76px;padding-left:3px">期间:2012.5</div>
<div class="st" style="left:1065px;width:85px;padding-left:3px">用户:超级用户</div>
<div class="st" style="left:1153px;width:122px;padding-left:3px">2012-05-03 12:12:03</div>
<svg class="a" style="left:515px;top:755px" width="16" height="15"><path d="M1 6l7-5 7 5v8H1z" fill="#cfe6fa" stroke="#3d80c0"/><path d="M3 5h10v3H3z" fill="#e8c050"/><path d="M1 6l7 5 7-5" fill="none" stroke="#3d80c0"/></svg>
<svg class="a" style="left:660px;top:755px" width="15" height="15"><rect x="0" y="4" width="11" height="11" fill="#4ca0e4"/><path d="M7 3h3V0h2v3h3v2h-3v3h-2V5H7z" fill="#e8a030"/></svg>
</body></html>
